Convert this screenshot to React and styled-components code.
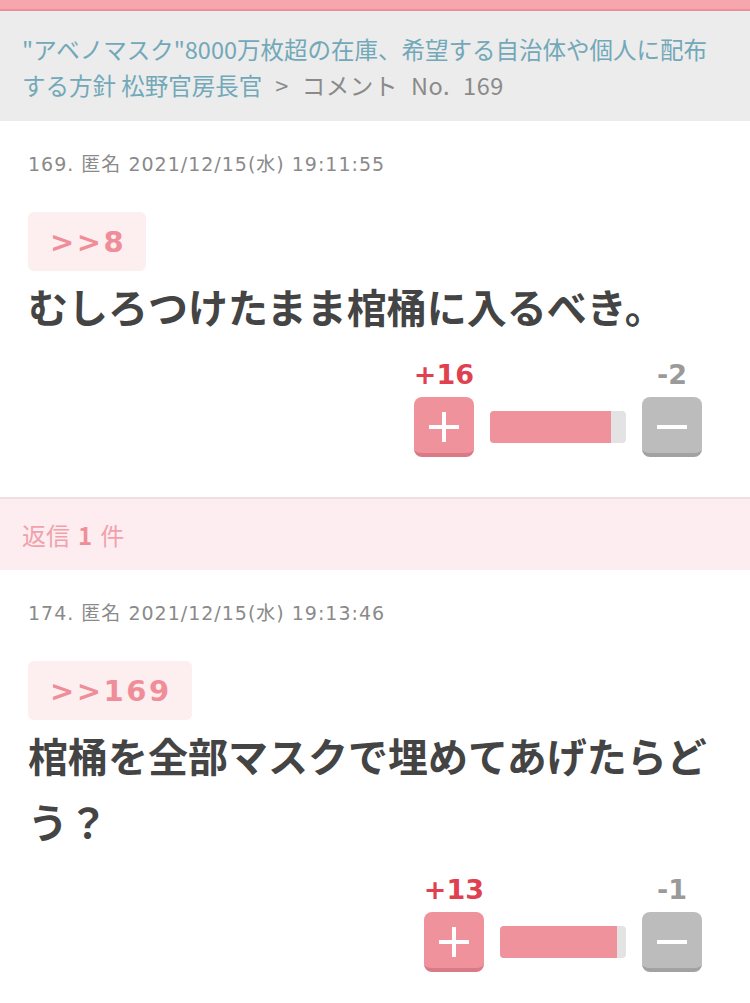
import React from "react";
import styled, { createGlobalStyle } from "styled-components";

const GlobalStyle = createGlobalStyle`
    body {
        margin: 0;
        background: #fff;
        font-family: "Noto Sans CJK JP", "Noto Sans", sans-serif;
    }
`

const TopBar = styled.div`
    height: 9px;
    background-color: #f6a7ae;
    border-bottom: 2px solid #ee8e9a;
    box-shadow: 0 1px 0 #f8d6da;
`

const Breadcrumb = styled.div`
    background-color: #ececec;
    padding: 20px 22px 18px;
    font-size: 23.5px;
    line-height: 36px;
    color: #8a8a8a;
`

const Crumb = styled.a`
    color: #72a8b8;
    text-decoration: none;
`

const Tail = styled.span`
    letter-spacing: 0.6px;
    word-spacing: 7px;
`

const Section = styled.div`
    padding: 30px 28px 40px;
    background: #fff;
`

const Meta = styled.div`
    font-family: "DejaVu Sans", "Noto Sans CJK JP", sans-serif;
    font-size: 19px;
    line-height: 26px;
    letter-spacing: 1px;
    color: #8a8a8a;
`

const Anchor = styled.div`
    display: inline-flex;
    align-items: center;
    height: 59px;
    padding: 0 20px 0 22px;
    margin-top: 35px;
    border-radius: 6px;
    background-color: #fdeef0;
    color: #ef8e98;
    font-family: "DejaVu Sans", sans-serif;
    font-size: 29px;
    font-weight: bold;
    letter-spacing: 2.5px;
`

const Body = styled.div`
    margin-top: 2px;
    font-size: 40px;
    line-height: 66px;
    font-weight: bold;
    color: #444;
`

const Votes = styled.div`
    display: flex;
    justify-content: flex-end;
    align-items: flex-end;
    gap: 16px;
    margin-top: ${props => props.top}px;
    padding-right: 20px;
`

const VoteCol = styled.div`
    display: flex;
    flex-direction: column;
    align-items: center;
    gap: 7px;
`

const Count = styled.div`
    font-family: "DejaVu Sans", sans-serif;
    font-size: 27px;
    line-height: 30px;
    font-weight: bold;
    color: ${props => props.good ? "#e0414f" : "#9a9a9a"};
`

const VoteButton = styled.div`
    width: 60px;
    height: 60px;
    box-sizing: border-box;
    border-radius: 8px;
    display: flex;
    align-items: center;
    justify-content: center;
    background-color: ${props => props.good ? "#f0929c" : "#bcbcbc"};
    border-bottom: 4px solid ${props => props.good ? "#d97b86" : "#a2a2a2"};
    padding-top: 4px;
`

const Bar = styled.div`
    width: ${props => props.width}px;
    height: 32px;
    margin-bottom: 14px;
    border-radius: 4px;
    background-color: #e3e3e3;
    overflow: hidden;
`

const Fill = styled.div`
    height: 100%;
    background-color: #f0929c;
`

const ReplyBand = styled.div`
    border-top: 2px solid #f2dde1;
    background-color: #fdedf1;
    padding: 0 22px;
    height: 71px;
    display: flex;
    align-items: center;
    font-size: 24px;
    color: #f0a2aa;
`

const ReplyNum = styled.b`
    margin: 0 8px;
    color: #ef8e98;
`

function Plus() {
    return (
        <svg width="30" height="30" viewBox="0 0 30 30">
            <rect x="13" y="0" width="4" height="30" fill="#fff" />
            <rect x="0" y="13" width="30" height="4" fill="#fff" />
        </svg>
    )
}

function Minus() {
    return (
        <svg width="30" height="30" viewBox="0 0 30 30">
            <rect x="0" y="13" width="30" height="4" fill="#fff" />
        </svg>
    )
}

function Comment({ no, date, anchor, text, good, bad, barWidth }) {
    const ratio = good / (good + bad);
    return (
        <Section>
            <Meta>{no}. 匿名 {date}</Meta>
            <Anchor>&gt;&gt;{anchor}</Anchor>
            <Body>{text}</Body>
            <Votes top={21}>
                <VoteCol>
                    <Count good>+{good}</Count>
                    <VoteButton good><Plus /></VoteButton>
                </VoteCol>
                <Bar width={barWidth}>
                    <Fill style={{ width: `${ratio * 100}%` }} />
                </Bar>
                <VoteCol>
                    <Count>-{bad}</Count>
                    <VoteButton><Minus /></VoteButton>
                </VoteCol>
            </Votes>
        </Section>
    )
}

export default function App() {
    return (
        <>
            <GlobalStyle />
            <TopBar />
            <Breadcrumb>
                <Crumb href="#">"アベノマスク"8000万枚超の在庫、希望する自治体や個人に配布する方針 松野官房長官</Crumb>
                <Tail> &gt; コメント No. 169</Tail>
            </Breadcrumb>
            <Comment
                no={169}
                date="2021/12/15(水) 19:11:55"
                anchor="8"
                text="むしろつけたまま棺桶に入るべき。"
                good={16}
                bad={2}
                barWidth={136}
            />
            <ReplyBand>返信<ReplyNum>1</ReplyNum>件</ReplyBand>
            <Comment
                no={174}
                date="2021/12/15(水) 19:13:46"
                anchor="169"
                text="棺桶を全部マスクで埋めてあげたらどう？"
                good={13}
                bad={1}
                barWidth={126}
            />
        </>
    )
}
